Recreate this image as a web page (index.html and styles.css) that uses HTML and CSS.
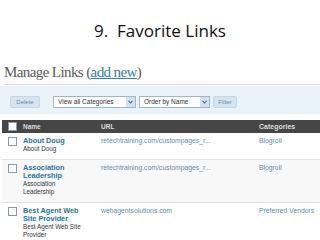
FILE: index.html
```html
<!DOCTYPE html>
<html lang="en">
<head>
<meta charset="UTF-8">
<title>9. Favorite Links</title>
<link rel="stylesheet" href="styles.css">
</head>
<body>

<div class="slide">
  <h1 class="slide-title">9.&nbsp; Favorite Links</h1>

  <div class="shot">
    <h2 class="page-head">Manage Links (<a href="#">add new</a>)</h2>

    <div class="tablenav">
      <button class="btn btn-delete">Delete</button>
      <div class="select cat-select">View all Categories<span class="arrow"><svg width="5" height="4" viewBox="0 0 5 4"><path d="M0.5 0.8 L2.5 3 L4.5 0.8" fill="none" stroke="#3a6ea5" stroke-width="1.1"/></svg></span></div>
      <div class="select order-select">Order by Name<span class="arrow"><svg width="5" height="4" viewBox="0 0 5 4"><path d="M0.5 0.8 L2.5 3 L4.5 0.8" fill="none" stroke="#3a6ea5" stroke-width="1.1"/></svg></span></div>
      <button class="btn btn-filter">Filter</button>
    </div>

    <table class="links">
      <thead>
        <tr>
          <th class="col-check"><span class="box box-head"></span></th>
          <th class="col-name">Name</th>
          <th class="col-url">URL</th>
          <th class="col-cat">Categories</th>
        </tr>
      </thead>
      <tbody>
        <tr>
          <td class="col-check"><span class="box"></span></td>
          <td class="col-name"><a class="link-name" href="#">About Doug</a><div class="desc">About Doug</div></td>
          <td class="col-url">retechtraining.com/custompages_r...</td>
          <td class="col-cat">Blogroll</td>
        </tr>
        <tr class="alt">
          <td class="col-check"><span class="box"></span></td>
          <td class="col-name"><a class="link-name" href="#">Association Leadership</a><div class="desc">Association Leadership</div></td>
          <td class="col-url">retechtraining.com/custompages_r...</td>
          <td class="col-cat">Blogroll</td>
        </tr>
        <tr>
          <td class="col-check"><span class="box"></span></td>
          <td class="col-name"><a class="link-name" href="#">Best Agent Web Site Provider</a><div class="desc">Best Agent Web Site Provider</div></td>
          <td class="col-url">webagentsolutions.com</td>
          <td class="col-cat">Preferred Vendors</td>
        </tr>
      </tbody>
    </table>
  </div>
</div>

</body>
</html>
```

FILE: styles.css
```css
body {
    margin: 0;
    background: #ffffff;
    font-family: "Liberation Sans", Arial, sans-serif;
    width: 320px;
    height: 240px;
    overflow: hidden;
}

.slide-title {
    font-family: "Open Sans", sans-serif;
    font-weight: normal;
    font-size: 17px;
    color: #111111;
    text-align: center;
    margin: 0;
    height: 63px;
    line-height: 62px;
}

.page-head {
    font-family: "Liberation Serif", serif;
    font-weight: normal;
    font-size: 15px;
    letter-spacing: -0.6px;
    color: #5a5a5a;
    margin: 0 0 0 4px;
    padding-bottom: 3px;
    line-height: 18px;
    border-bottom: 1px solid #dcdcdc;
}

.page-head a {
    color: #2e7fa8;
}

.tablenav {
    background: #eaf2fa;
    margin-top: 1px;
    height: 28px;
    box-sizing: border-box;
    display: flex;
    align-items: flex-start;
    padding: 10px 0 0 10px;
}

.btn {
    font-family: "Liberation Sans", Arial, sans-serif;
    font-size: 6px;
    color: #6a8aa8;
    background: #d6e4f0;
    border: 1px solid #c4d7e8;
    border-radius: 2px;
    height: 12px;
    padding: 0;
}

.btn-delete {
    width: 30px;
    margin-right: 13px;
}

.btn-filter {
    width: 24px;
    margin-left: 3px;
}

.select {
    font-size: 6.5px;
    color: #333333;
    background: #ffffff;
    border: 1px solid #9fb6cc;
    height: 12px;
    line-height: 10px;
    padding-left: 4px;
    position: relative;
    box-sizing: border-box;
}

.cat-select {
    width: 83px;
}

.order-select {
    width: 71px;
    margin-left: 3px;
}

.arrow {
    position: absolute;
    right: 0;
    top: 0;
    width: 9px;
    height: 10px;
    background: #d4e2f0;
    display: flex;
    align-items: center;
    justify-content: center;
}

.links {
    border-collapse: collapse;
    table-layout: fixed;
    width: 318px;
    margin: 6px 0 0 2px;
    font-size: 6.8px;
}

.links th {
    background: #464646;
    color: #dcdcdc;
    font-weight: bold;
    font-size: 6.5px;
    text-align: left;
    height: 13px;
    padding: 0;
}

.links th.col-cat {
    font-size: 7px;
}

.links td {
    vertical-align: top;
    padding: 4px 0 6px 0;
    line-height: 8px;
    border-bottom: 1px solid #e2e2e2;
}

.links tr.alt td {
    background: #f8f8f8;
}

.col-check {
    width: 15px;
    padding-left: 6px !important;
}

.col-name {
    width: 78px;
}

.col-url {
    width: 158px;
    color: #5b8fb5;
}

.col-cat {
    color: #5b8fb5;
}

.box {
    display: block;
    width: 9px;
    height: 9px;
    border: 1px solid #8a9aab;
    background: #ffffff;
    box-sizing: border-box;
}

.links td .box {
    margin-top: 0;
}

.link-name {
    color: #21759b;
    font-weight: bold;
    font-size: 7.3px;
    text-decoration: none;
    display: block;
    width: 64px;
}

.desc {
    color: #333333;
    font-size: 6.3px;
    width: 64px;
}
```
